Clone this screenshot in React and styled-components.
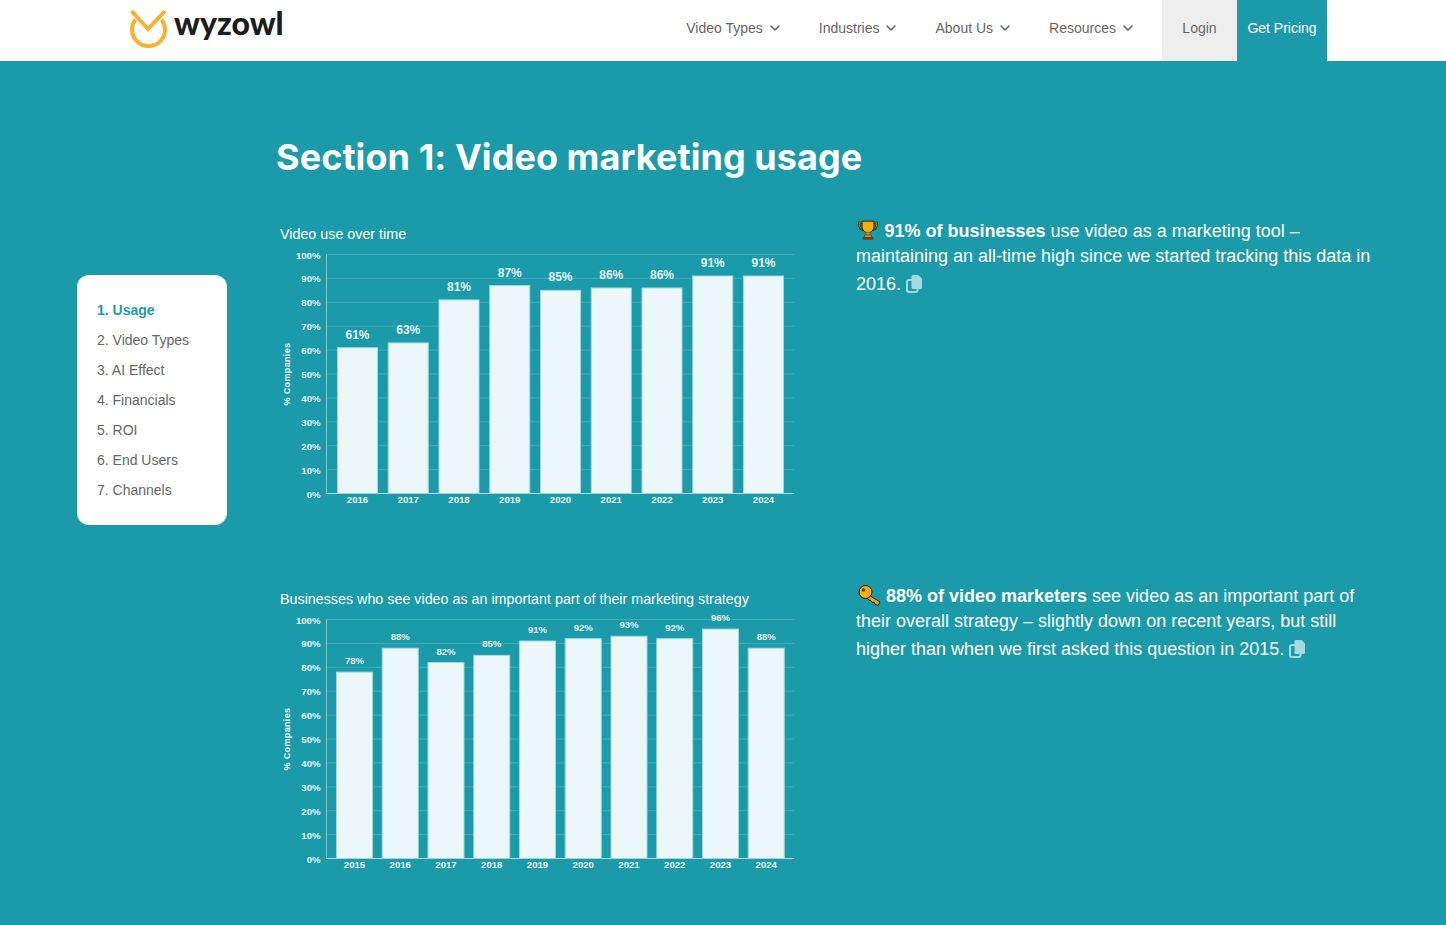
import React from "react";
import styled, { createGlobalStyle } from "styled-components";
import { ChevronDown } from "lucide-react";

const Global = createGlobalStyle`
  html, body { margin: 0; padding: 0; background: #1b9aaa; }
  body { font-family: "Liberation Sans", Arial, sans-serif; overflow: hidden; }
`;

const Page = styled.div`
  width: 1446px;
  height: 925px;
  overflow: hidden;
  background: #1b9aaa;
`;

const Header = styled.header`
  height: 61px;
  background: #fff;
  display: flex;
  align-items: stretch;
  justify-content: space-between;
  padding: 0 119px 0 130px;
`;

const Logo = styled.a`
  display: flex;
  align-items: flex-start;
  gap: 5px;
  padding-top: 9px;
`;

const LogoWord = styled.span`
  font-family: Lato, sans-serif;
  font-weight: 900;
  font-size: 32px;
  line-height: 36px;
  color: #1a1d20;
  margin-top: -4px;
`;

const Nav = styled.nav`
  display: flex;
  align-items: stretch;
`;

const NavItem = styled.a`
  display: flex;
  align-items: center;
  gap: 4px;
  margin-right: 36px;
  font-size: 14px;
  color: #666;
  padding-bottom: 6px;
  &:nth-child(4) { margin-right: 26px; }
`;

const NavButton = styled.a`
  display: flex;
  align-items: center;
  justify-content: center;
  width: ${(p) => p.$w}px;
  font-size: 14px;
  padding-bottom: 6px;
  background: ${(p) => (p.$primary ? "#1b9aaa" : "#eeeeee")};
  color: ${(p) => (p.$primary ? "#fff" : "#666")};
`;

const Main = styled.main`
  display: flex;
  align-items: flex-start;
  padding-left: 77px;
`;

const Sidebar = styled.ul`
  list-style: none;
  margin: 214px 50px 0 0;
  padding: 20px;
  width: 150px;
  box-sizing: border-box;
  flex: none;
  background: #fff;
  border-radius: 12px;
`;

const SideItem = styled.li`
  height: 30px;
  line-height: 30px;
  font-size: 14px;
  white-space: nowrap;
  color: ${(p) => (p.$active ? "#1b9aaa" : "#666")};
  font-weight: ${(p) => (p.$active ? 700 : 400)};
`;

const Content = styled.div`
  flex: 1;
`;

const Title = styled.h2`
  margin: 72px 0 0 -1px;
  font-family: Inter, sans-serif;
  font-weight: 700;
  font-size: 36px;
  line-height: 48px;
  letter-spacing: 0.06px;
  color: #fff;
`;

const Row = styled.section`
  display: flex;
  align-items: flex-start;
  height: 365px;
  &:first-of-type { margin-top: 38px; }
`;

const ChartCol = styled.div`
  width: 579px;
  flex: none;
  padding: 6px 0 0 3px;
  box-sizing: border-box;
`;

const ChartTitle = styled.div`
  font-size: 14.3px;
  line-height: 18px;
  color: #fff;
  white-space: nowrap;
`;

const ChartSvg = styled.svg`
  display: block;
  margin-top: 5px;
`;

const Copy = styled.p`
  margin: 0;
  width: 524px;
  font-size: 18px;
  line-height: 25.2px;
  color: #fff;
  strong { font-weight: 700; }
`;

const Icon = styled.svg`
  display: inline-block;
  vertical-align: ${(p) => p.$va || "-3px"};
  margin-right: ${(p) => p.$mr || 0}px;
  margin-left: ${(p) => p.$ml || 0}px;
`;

const Trophy = () => (
  <Icon width="20" height="20" viewBox="0 0 22 21" $va="-3px" $ml={2} $mr={6.5}>
    <path d="M5 2.500H1.500v2.500c0 3 2 5 5.500 5.500M17 2.500h3.500v2.500c0 3-2 5-5.500 5.500" fill="none" stroke="#2a1a00" strokeWidth="2.400" />
    <path d="M5 2.500H1.500v2.500c0 3 2 5 5.500 5.500M17 2.500h3.500v2.500c0 3-2 5-5.500 5.500" fill="none" stroke="#f7a70e" strokeWidth="0.800" />
    <path d="M4.500 0.800h13v5.500c0 4-2.500 7-6.500 7s-6.500-3-6.500-7z" fill="#f9ad12" stroke="#2a1a00" />
    <rect x="9.500" y="13" width="3" height="3" fill="#e09408" />
    <path d="M7.500 16h7l1 2.500h-9z" fill="#f9ad12" stroke="#2a1a00" strokeWidth="0.700" />
    <rect x="5" y="18.500" width="12" height="2.500" fill="#6a3a10" />
  </Icon>
);

const Key = () => (
  <Icon width="23" height="21" viewBox="0 0 23 21" $va="-4px" $ml={1.5} $mr={5.5}>
    <path d="M10 9.500l12 7.500-2 3.500-3-1.500-1-2-2 .5-1-2-2-.5-3-2.500z" fill="#f2a512" stroke="#2a1a00" />
    <circle cx="7.500" cy="7" r="6.500" fill="#f9ad12" stroke="#2a1a00" />
    <circle cx="5.500" cy="5" r="1.800" fill="#5a3a00" />
  </Icon>
);

const CopyIcon = () => (
  <Icon width="17" height="24" viewBox="0 0 17 24" $va="-3px" $ml={5}>
    <rect x="1" y="11" width="10.500" height="12" rx="2" fill="none" stroke="#a6d8df" strokeWidth="2" />
    <path d="M5.500 7.500a1.500 1.500 0 0 1 1.500-1.500h5.500l3.500 3.500v9a1.500 1.500 0 0 1-1.500 1.500h-7.500a1.500 1.500 0 0 1-1.500-1.500z" fill="#a6d8df" />
  </Icon>
);

const LogoMark = () => (
  <svg width="39" height="40" viewBox="0 0 39 40" style={{ flex: "none" }}>
    <path d="M5.500 10.500A16.500 16.500 0 1 0 31.500 10.500" fill="none" stroke="#fbb034" strokeWidth="4" />
    <path d="M1.500 2l16.500 18L35 2" fill="none" stroke="#fbb034" strokeWidth="4" />
  </svg>
);

const W = 520, TOP = 6.5, BOTTOM = 245.5, AXIS = 46.5, RIGHT = 514;

const Chart = ({ values, years, start, step, bar, size, labelDy }) => {
  const h = BOTTOM - TOP;
  const ticks = [0, 10, 20, 30, 40, 50, 60, 70, 80, 90, 100];
  return (
    <ChartSvg width={W} height={258} viewBox={`0 0 ${W} 258`} fontFamily="'Liberation Sans', sans-serif">
      {ticks.map((t) => {
        const y = BOTTOM - (h * t) / 100;
        return (
          <g key={t}>
            {t > 0 && <line x1={AXIS} x2={RIGHT} y1={y} y2={y} stroke="rgba(255,255,255,0.18)" />}
            <text x={40.5} y={y + 4} textAnchor="end" fontSize="9.6" fontWeight="700" fill="#eaf6f7">{t}%</text>
          </g>
        );
      })}
      <line x1={AXIS} x2={AXIS} y1={TOP} y2={BOTTOM} stroke="rgba(255,255,255,0.45)" />
      <line x1={AXIS} x2={RIGHT} y1={BOTTOM} y2={BOTTOM} stroke="rgba(255,255,255,0.65)" />
      <text transform="translate(9.500 126) rotate(-90)" textAnchor="middle" fontSize="9" fontWeight="700" letterSpacing="0.35" fill="#eaf6f7">% Companies</text>
      {values.map((v, i) => {
        const x = start + step * i;
        const top = BOTTOM - (h * v) / 100;
        return (
          <g key={years[i]}>
            <rect x={x + 0.5} y={top} width={bar - 1} height={BOTTOM - top} fill="#ebf7f8" stroke="#a4d7dd" />
            <text x={x + bar / 2} y={top - labelDy} textAnchor="middle" fontSize={size} fontWeight="700" fill="#e3f3f5">{v}%</text>
            <text x={x + bar / 2} y={255} textAnchor="middle" fontSize="9.6" fontWeight="700" fill="#eaf6f7">{years[i]}</text>
          </g>
        );
      })}
    </ChartSvg>
  );
};

const nav = ["Video Types", "Industries", "About Us", "Resources"];
const side = ["1. Usage", "2. Video Types", "3. AI Effect", "4. Financials", "5. ROI", "6. End Users", "7. Channels"];

export default function App() {
  return (
    <Page>
      <Global />
      <Header>
        <Logo>
          <LogoMark />
          <LogoWord>wyzowl</LogoWord>
        </Logo>
        <Nav>
          {nav.map((n) => (
            <NavItem key={n}>
              {n}
              <ChevronDown size={16} strokeWidth={2.400} />
            </NavItem>
          ))}
          <NavButton $w={75}>Login</NavButton>
          <NavButton $w={90} $primary>Get Pricing</NavButton>
        </Nav>
      </Header>
      <Main>
        <Sidebar>
          {side.map((s, i) => (
            <SideItem key={s} $active={i === 0}>{s}</SideItem>
          ))}
        </Sidebar>
        <Content>
          <Title>Section 1: Video marketing usage</Title>
          <Row>
            <ChartCol>
              <ChartTitle>Video use over time</ChartTitle>
              <Chart
                values={[61, 63, 81, 87, 85, 86, 86, 91, 91]}
                years={[2016, 2017, 2018, 2019, 2020, 2021, 2022, 2023, 2024]}
                start={57}
                step={50.75}
                bar={41}
                size={12}
                labelDy={9}
              />
            </ChartCol>
            <Copy>
              <Trophy />
              <strong>91% of businesses</strong> use video as a marketing tool – maintaining an all-time high since we started tracking this data in 2016.
              <CopyIcon />
            </Copy>
          </Row>
          <Row>
            <ChartCol>
              <ChartTitle>Businesses who see video as an important part of their marketing strategy</ChartTitle>
              <Chart
                values={[78, 88, 82, 85, 91, 92, 93, 92, 96, 88]}
                years={[2015, 2016, 2017, 2018, 2019, 2020, 2021, 2022, 2023, 2024]}
                start={56}
                step={45.75}
                bar={37}
                size={9.6}
                labelDy={8}
              />
            </ChartCol>
            <Copy>
              <Key />
              <strong>88% of video marketers</strong> see video as an important part of their overall strategy – slightly down on recent years, but still higher than when we first asked this question in 2015.
              <CopyIcon />
            </Copy>
          </Row>
        </Content>
      </Main>
    </Page>
  );
}
